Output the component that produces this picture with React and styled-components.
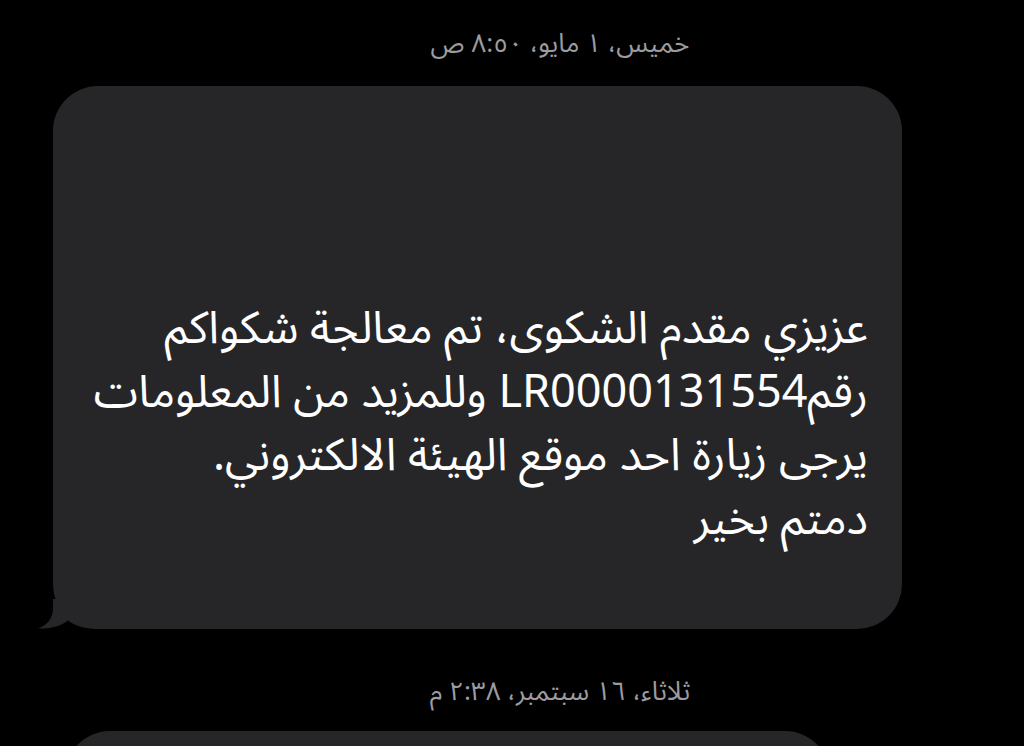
import React from "react";
import styled, { createGlobalStyle } from "styled-components";

const GlobalStyle = createGlobalStyle`
  html, body {
    margin: 0;
    padding: 0;
    background: #000;
    overflow: hidden;
  }
  body {
    font-family: "Noto Sans Arabic", "Noto Sans", "DejaVu Sans", sans-serif;
  }
`;

const Thread = styled.div`
  display: flex;
  flex-direction: column;
  align-items: flex-start;
  padding-top: 28px;
  height: 746px;
  box-sizing: border-box;
  overflow: hidden;
`;

const Stamp = styled.div`
  align-self: stretch;
  padding-left: 96px;
  text-align: center;
  direction: rtl;
  color: #9b9ba0;
  font-size: 26px;
  line-height: 32px;
  margin-top: ${(p) => p.$top || 0}px;
`;

const Bubble = styled.div`
  position: relative;
  box-sizing: border-box;
  margin-left: ${(p) => p.$left}px;
  margin-top: ${(p) => p.$top}px;
  width: ${(p) => p.$width}px;
  min-height: ${(p) => p.$height || 0}px;
  background: #262629;
  border-radius: 45px;
  padding: 211px 34px 78px 40px;
  direction: rtl;
  text-align: right;
  color: #fff;
  font-size: 45px;
  line-height: 63.5px;
  flex-shrink: 0;
`;

const Line = styled.div`
  white-space: nowrap;
`;

const Tail = styled.svg`
  position: absolute;
  left: -15px;
  bottom: 0;
  width: 62px;
  height: 30px;
`;

export default function App() {
  return (
    <>
      <GlobalStyle />
      <Thread>
        <Stamp>خميس، ١ مايو، ٨:٥٠ ص</Stamp>
        <Bubble $left={53} $top={26} $width={849}>
          <Line>عزيزي مقدم الشكوى، تم معالجة شكواكم</Line>
          <Line>رقمLR0000131554 وللمزيد من المعلومات</Line>
          <Line>يرجى زيارة احد موقع الهيئة الالكتروني.</Line>
          <Line>دمتم بخير</Line>
          <Tail viewBox="0 0 62 30">
            <path
              d="M15 0 L15 9 C15 20 8 27 0 29.5 C10 30 22 28 30 21.5 C38 28 50 30 62 30 L62 0 Z"
              fill="#262629"
            />
          </Tail>
        </Bubble>
        <Stamp $top={47}>ثلاثاء، ١٦ سبتمبر، ٢:٣٨ م</Stamp>
        <Bubble $left={65} $top={23} $width={765} $height={200} />
      </Thread>
    </>
  );
}
